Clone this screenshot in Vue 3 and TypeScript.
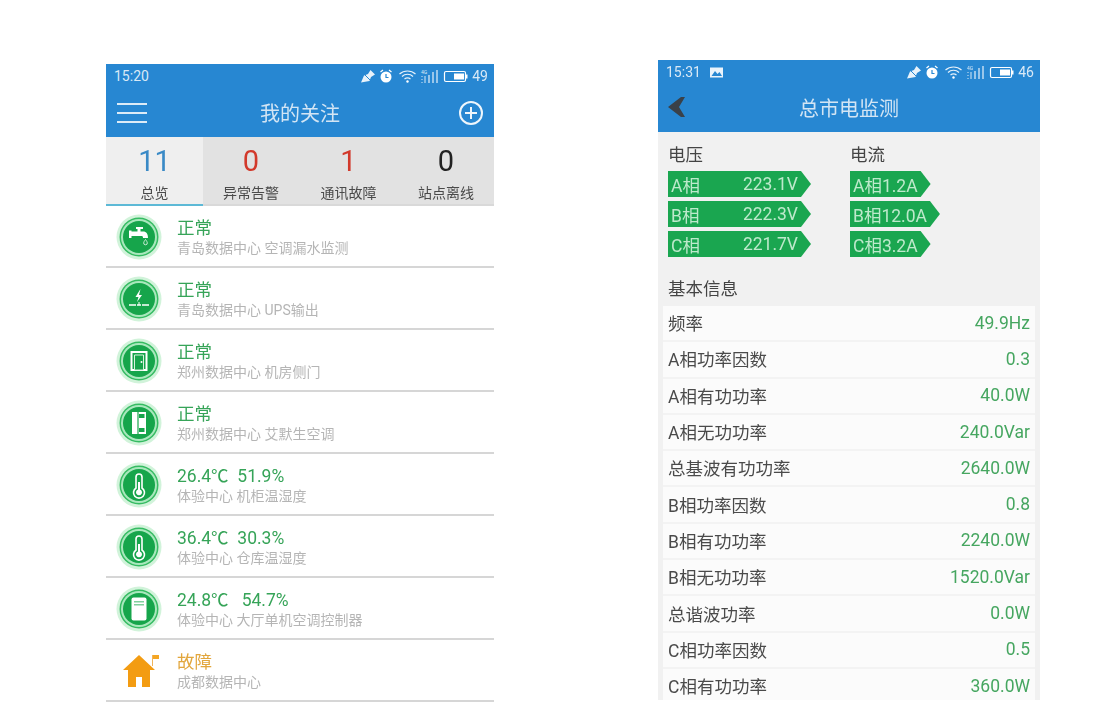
<script setup lang="ts">
type Watch = { icon: string; title: string; sub: string; fault?: boolean }
type Tab = { count: number; label: string; tone: string }
type Phase = { name: string; value: string }

const tabs: Tab[] = [
  { count: 11, label: '总览', tone: 'blue' },
  { count: 0, label: '异常告警', tone: 'red' },
  { count: 1, label: '通讯故障', tone: 'red' },
  { count: 0, label: '站点离线', tone: 'dark' },
]

const watches: Watch[] = [
  { icon: 'tap', title: '正常', sub: '青岛数据中心 空调漏水监测' },
  { icon: 'bolt', title: '正常', sub: '青岛数据中心 UPS输出' },
  { icon: 'door', title: '正常', sub: '郑州数据中心 机房侧门' },
  { icon: 'cabinet', title: '正常', sub: '郑州数据中心 艾默生空调' },
  { icon: 'thermo', title: '26.4℃  51.9%', sub: '体验中心 机柜温湿度' },
  { icon: 'thermo', title: '36.4℃  30.3%', sub: '体验中心 仓库温湿度' },
  { icon: 'aircon', title: '24.8℃   54.7%', sub: '体验中心 大厅单机空调控制器' },
  { icon: 'house', title: '故障', sub: '成都数据中心', fault: true },
]

const voltages: Phase[] = [
  { name: 'A相', value: '223.1V' },
  { name: 'B相', value: '222.3V' },
  { name: 'C相', value: '221.7V' },
]
const currents = ['A相1.2A', 'B相12.0A', 'C相3.2A']

const infoRows: Phase[] = [
  { name: '频率', value: '49.9Hz' },
  { name: 'A相功率因数', value: '0.3' },
  { name: 'A相有功功率', value: '40.0W' },
  { name: 'A相无功功率', value: '240.0Var' },
  { name: '总基波有功功率', value: '2640.0W' },
  { name: 'B相功率因数', value: '0.8' },
  { name: 'B相有功功率', value: '2240.0W' },
  { name: 'B相无功功率', value: '1520.0Var' },
  { name: '总谐波功率', value: '0.0W' },
  { name: 'C相功率因数', value: '0.5' },
  { name: 'C相有功功率', value: '360.0W' },
]
</script>

<template>
  <div class="page">
    <svg class="defs" width="0" height="0" aria-hidden="true">
      <symbol id="i-badge" viewBox="0 0 46 46">
        <circle cx="23" cy="23" r="22.500" fill="#bdeecb" opacity="0.7" />
        <circle cx="23" cy="23" r="19.500" fill="#35bb62" />
        <circle cx="23" cy="23" r="18" fill="#a9e8bd" />
        <circle cx="23" cy="23" r="16" fill="#16a54b" />
      </symbol>
      <symbol id="i-tap" viewBox="0 0 46 46">
        <path d="M20 13h7v2h-2.500v2.500H27c3.500 0 5 2.500 5 6.500h-5c0-1.500-.5-2-1.500-2H15v-4.500h6.500V15H20z" fill="#fff" />
        <path d="M13 16.500h2.500V24H13z" fill="#fff" />
        <path d="M29.500 25.500c1.300 1.700 1.800 2.700 1.800 3.500a1.800 1.800 0 0 1-3.600 0c0-.8.500-1.800 1.800-3.500z" fill="none" stroke="#cfeeda" stroke-width="1" />
      </symbol>
      <symbol id="i-bolt" viewBox="0 0 46 46">
        <path d="M24.500 13l-5 8h3l-1.500 5 5-7h-3z" fill="#fff" />
        <path d="M13 29h7M26 29h7M21 29h4" stroke="#fff" stroke-width="1.500" fill="none" />
        <path d="M23 26v3" stroke="#fff" stroke-width="1" />
      </symbol>
      <symbol id="i-door" viewBox="0 0 46 46">
        <path d="M15.500 14h15v18h-15z" fill="none" stroke="#fff" stroke-width="2" />
        <path d="M18.500 17h9v15h-9z" fill="#16a54b" stroke="#d6f3dd" stroke-width="1" />
        <circle cx="25.500" cy="24" r="1" fill="#fff" />
      </symbol>
      <symbol id="i-cabinet" viewBox="0 0 46 46">
        <path d="M16 12h14v22H16z" fill="#fff" />
        <path d="M23 14h5.500v4H23zM23 28h5.500v4H23z" fill="#16a54b" />
        <path d="M22 12v22" stroke="#16a54b" stroke-width="1.200" />
      </symbol>
      <symbol id="i-thermo" viewBox="0 0 46 46">
        <path d="M20 15a3 3 0 0 1 6 0v11a5.500 5.500 0 1 1-6 0z" fill="none" stroke="#fff" stroke-width="1.600" />
        <path d="M22 20h2v7.500a3 3 0 1 1-2 0z" fill="#fff" />
      </symbol>
      <symbol id="i-aircon" viewBox="0 0 46 46">
        <rect x="15.500" y="11.500" width="15" height="23" rx="2" fill="#fff" />
        <path d="M18 15h10v1.500H18zM18 18h10v1.500H18z" fill="#7fd09c" />
      </symbol>
      <symbol id="i-house" viewBox="0 0 46 46">
        <path d="M23 7l16 15h-5v17h-8V29h-6v10h-8V22H7z" fill="#f39c12" />
        <path d="M36.500 7v11" stroke="#f0b45a" stroke-width="1" />
        <path d="M37 7h6v4h-6z" fill="#f5a623" />
      </symbol>
      <symbol id="i-status" viewBox="0 0 108 14">
        <path d="M1 13.500l3-7 4-1.500 2.500-4 4.500 4.500-4 2.500-1.500 4z" fill="#e8f2fa" />
        <path d="M2 3l9 9" stroke="#2787d2" stroke-width="1" />
        <circle cx="26" cy="8" r="5.500" fill="#fff" />
        <path d="M26 5v3.500h2.500" stroke="#2787d2" stroke-width="1.200" fill="none" />
        <path d="M20.500 3l2.500-2M31.500 3L29 1" stroke="#fff" stroke-width="1.200" />
        <path d="M39.500 5c4.500-4 11.500-4 16 0M42 7.500c3-3 8-3 11 0M44.500 10c2-1.500 4-1.500 6 0" stroke="#e6f1fa" stroke-width="1.200" fill="none" />
        <circle cx="47.500" cy="12.500" r="1.200" fill="#fff" />
        <path d="M62 7v1M62 10v1M62 13v1M65 7v7" stroke="#d9e9f6" stroke-width="1" />
        <path d="M69 6v8M73 3v11M77 1v13" stroke="#e6f1fa" stroke-width="1.200" />
        <rect x="84.500" y="2.500" width="21" height="10" rx="1.500" fill="none" stroke="#fff" stroke-width="1.200" />
        <rect x="94" y="4.500" width="10" height="6" fill="#fff" />
        <rect x="106" y="5.500" width="1.500" height="4" fill="#fff" />
      </symbol>
    </svg>

    <section class="phone phone-watch">
      <header class="appbar">
        <div class="statusbar">
          <span class="clock">15:20</span>
          <span class="status-right">
            <svg class="status-icons" width="108" height="14">
              <use href="#i-status" />
              <text class="net" x="61" y="5">4G</text>
            </svg>
            <span>49</span>
          </span>
        </div>
        <div class="titlebar">
          <svg class="menu" width="32" height="22" viewBox="0 0 32 22">
            <path d="M1 2h30M1 11h30M1 20h30" stroke="#dcebf7" stroke-width="2" />
          </svg>
          <span class="title">我的关注</span>
          <svg class="plus" width="26" height="26" viewBox="0 0 26 26">
            <circle cx="13" cy="13" r="11" fill="none" stroke="#eef6fc" stroke-width="2" />
            <path d="M7 13h12M13 7v12" stroke="#eef6fc" stroke-width="2" />
          </svg>
        </div>
      </header>

      <nav class="tabs">
        <div v-for="(tab, i) in tabs" :key="tab.label" class="tab" :class="{ active: i === 0 }">
          <span class="count" :class="tab.tone">{{ tab.count }}</span>
          <span class="tab-label">{{ tab.label }}</span>
        </div>
      </nav>

      <ul class="watch-list">
        <li v-for="item in watches" :key="item.sub" class="watch">
          <span class="watch-icon">
            <svg v-if="item.icon !== 'house'" width="46" height="46"><use href="#i-badge" /></svg>
            <svg width="46" height="46"><use :href="`#i-${item.icon}`" /></svg>
          </span>
          <span class="watch-text">
            <span class="watch-title" :class="{ fault: item.fault }">{{ item.title }}</span>
            <span class="watch-sub">{{ item.sub }}</span>
          </span>
        </li>
      </ul>
    </section>

    <section class="phone phone-mains">
      <header class="appbar">
        <div class="statusbar">
          <span class="clock">
            15:31
            <svg class="pic" width="15" height="11" viewBox="0 0 14 11">
              <rect x="0.500" y="0.500" width="13" height="10" fill="#eaf3fb" />
              <path d="M2 9l3.500-5 2.500 3 2-2 2.500 4z" fill="#2787d2" />
            </svg>
          </span>
          <span class="status-right">
            <svg class="status-icons" width="108" height="14">
              <use href="#i-status" />
              <text class="net" x="61" y="5">4G</text>
            </svg>
            <span>46</span>
          </span>
        </div>
        <div class="titlebar">
          <svg class="back" width="18" height="20" viewBox="0 0 18 20">
            <path d="M0 10L13 0h4l-6 10 6 10h-4z" fill="#3a4149" />
          </svg>
          <span class="title">总市电监测</span>
        </div>
      </header>

      <div class="mains-body">
        <div class="readings">
          <div class="reading-col">
            <h3 class="reading-head">电压</h3>
            <div v-for="v in voltages" :key="v.name" class="tag tag-wide">
              <span>{{ v.name }}</span>
              <span>{{ v.value }}</span>
            </div>
          </div>
          <div class="reading-col">
            <h3 class="reading-head">电流</h3>
            <div v-for="c in currents" :key="c" class="tag">{{ c }}</div>
          </div>
        </div>

        <h3 class="info-head">基本信息</h3>
        <div class="info-list">
          <div v-for="row in infoRows" :key="row.name" class="info-row">
            <span class="info-name">{{ row.name }}</span>
            <span class="info-value">{{ row.value }}</span>
          </div>
        </div>
      </div>
    </section>
  </div>
</template>

<style>
html,
body {
  background: #fff;
}
</style>

<style scoped>
* {
  box-sizing: border-box;
}
.page {
  display: flex;
  align-items: flex-start;
  gap: 164px;
  height: 726px;
  padding: 60px 0 0 106px;
  overflow: hidden;
  background: #fff;
  font-family: Roboto, "Noto Sans CJK SC", sans-serif;
}
.defs {
  position: absolute;
}
.phone {
  filter: blur(0.6px);
}
.phone-watch {
  width: 388px;
  margin-top: 4px;
}
.phone-mains {
  width: 382px;
}
.appbar {
  background: #2787d2;
  color: #d9e9f6;
}
.statusbar {
  display: flex;
  align-items: center;
  justify-content: space-between;
  height: 24px;
  padding: 0 6px 0 8px;
  font-size: 14px;
}
.clock {
  display: flex;
  align-items: center;
  gap: 8px;
}
.status-right {
  display: flex;
  align-items: center;
  gap: 4px;
}
.status-icons {
  display: block;
}
.net {
  font-size: 5px;
  fill: #d9e9f6;
}
.titlebar {
  position: relative;
  display: flex;
  align-items: center;
  justify-content: space-between;
  height: 49px;
  padding: 0 10px;
}
.phone-mains .titlebar {
  height: 48px;
  padding-bottom: 2px;
}
.title {
  position: absolute;
  left: 0;
  right: 0;
  text-align: center;
  font-size: 20px;
  color: #d3e5f4;
}
.tabs {
  display: grid;
  grid-template-columns: 97px 96px 99px 96px;
  height: 69px;
  background: #e2e2e2;
}
.tab {
  display: flex;
  flex-direction: column;
  align-items: center;
  padding-top: 6px;
  border-bottom: 2px solid #d9d9d9;
}
.tab.active {
  background: #efefef;
  border-bottom-color: #5db9d6;
}
.count {
  font-size: 29px;
  line-height: 36px;
}
.count.blue {
  color: #3a8ac6;
}
.count.red {
  color: #d2392b;
}
.count.dark {
  color: #222;
}
.tab-label {
  margin-top: 5px;
  font-size: 14px;
  line-height: 18px;
  color: #4a4a4a;
}
.watch-list {
  margin: 0;
  padding: 0;
  list-style: none;
}
.watch {
  display: flex;
  align-items: center;
  height: 62px;
  padding: 2px 0 0 10px;
  border-bottom: 2px solid #d6d6d6;
}
.watch-icon {
  position: relative;
  flex: none;
  width: 46px;
  height: 46px;
}
.watch-icon svg {
  position: absolute;
  inset: 0;
}
.watch-text {
  display: flex;
  flex-direction: column;
  margin-left: 15px;
}
.watch-title {
  font-size: 17.500px;
  line-height: 22px;
  white-space: pre;
  color: #36a458;
}
.watch-title.fault {
  color: #e2a63c;
}
.watch-sub {
  font-size: 14px;
  line-height: 18px;
  color: #b5b5b5;
}
.mains-body {
  height: 568px;
  overflow: hidden;
  padding-top: 12px;
  background: #f1f1f1;
}
.readings {
  display: grid;
  grid-template-columns: 182px 1fr;
  padding-left: 10px;
}
.reading-col {
  display: flex;
  flex-direction: column;
  align-items: flex-start;
  gap: 4px;
}
.reading-head {
  margin: 0;
  font-size: 17.500px;
  font-weight: 400;
  line-height: 23px;
  color: #444;
}
.tag {
  display: flex;
  align-items: center;
  justify-content: space-between;
  height: 26px;
  padding: 0 13px 0 3px;
  font-size: 17.500px;
  color: #bde9cb;
  background: #1aa650;
  clip-path: polygon(0 0, calc(100% - 10px) 0, 100% 50%, calc(100% - 10px) 100%, 0 100%);
}
.tag-wide {
  width: 143px;
}
.info-head {
  margin: 20px 0 4px 10px;
  font-size: 17.500px;
  font-weight: 400;
  line-height: 25px;
  color: #444;
}
.info-list {
  margin: 0 5px;
  background: #fbfbfb;
}
.info-row {
  display: flex;
  align-items: center;
  justify-content: space-between;
  height: 36.300px;
  padding: 0 5px 1px;
  border-bottom: 2px solid #f3f3f3;
  font-size: 17.500px;
}
.info-name {
  color: #4a4a4a;
}
.info-value {
  color: #46a660;
}
</style>
